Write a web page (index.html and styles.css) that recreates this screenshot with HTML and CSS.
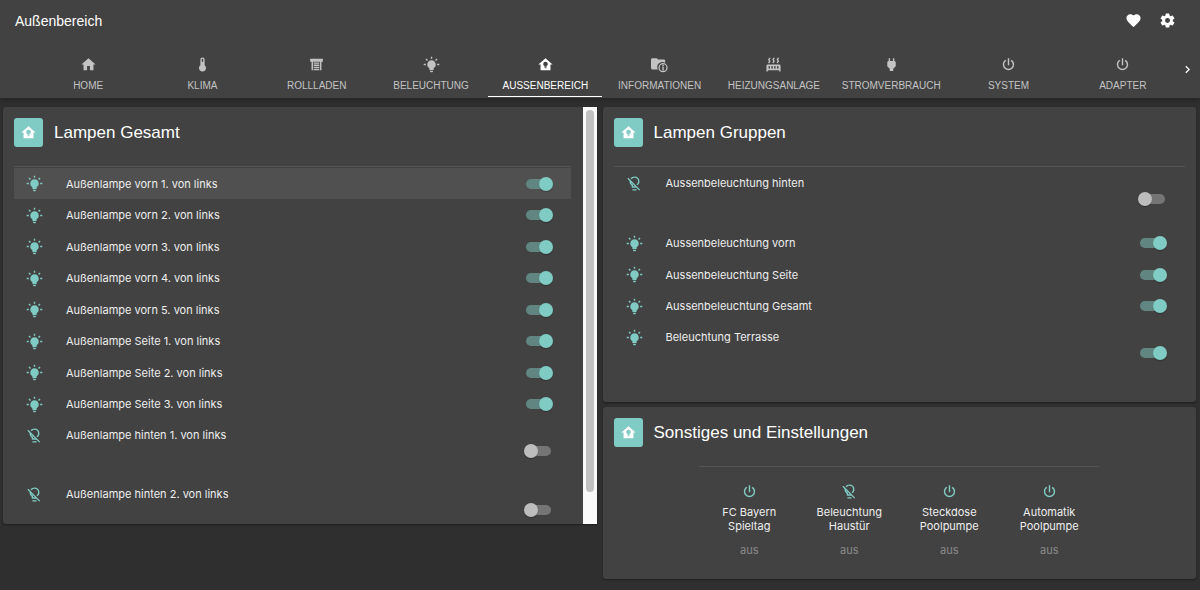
FILE: index.html
```html
<!DOCTYPE html>
<html lang="de">
<head>
<meta charset="utf-8">
<meta name="viewport" content="width=device-width, initial-scale=1">
<title>Außenbereich</title>
<link rel="stylesheet" href="styles.css">
</head>
<body>
<svg class="sprite" aria-hidden="true">
  <symbol id="home" viewBox="0 0 24 24"><path d="M10,20V14H14V20H19V12H22L12,3L2,12H5V20H10Z"/></symbol>
  <symbol id="thermometer" viewBox="0 0 24 24"><path d="M15 13V5A3 3 0 0 0 9 5V13A5 5 0 1 0 15 13M12 4A1 1 0 0 1 13 5V8H11V5A1 1 0 0 1 12 4Z"/></symbol>
  <symbol id="shutter" viewBox="0 0 24 24"><path d="M3 4H21V8H19V20H17V8H7V20H5V8H3V4M8 9H16V11H8V9M8 12H16V14H8V12M8 15H16V17H8V15M8 18H16V20H8V18Z"/></symbol>
  <symbol id="bulb-on" viewBox="0 0 24 24"><path d="M12,6A6,6 0 0,1 18,12C18,14.22 16.79,16.16 15,17.2V19A1,1 0 0,1 14,20H10A1,1 0 0,1 9,19V17.2C7.21,16.16 6,14.22 6,12A6,6 0 0,1 12,6M14,21V22A1,1 0 0,1 13,23H11A1,1 0 0,1 10,22V21H14M20,11H23V13H20V11M1,11H4V13H1V11M13,1V4H11V1H13M4.92,3.5L7.05,5.64L5.63,7.05L3.5,4.93L4.92,3.5M16.95,5.63L19.07,3.5L20.5,4.93L18.37,7.05L16.95,5.63Z"/></symbol>
  <symbol id="bulb-off" viewBox="0 0 24 24"><path d="M12,2C9.76,2 7.78,3.05 6.5,4.68L7.93,6.11C8.84,4.84 10.32,4 12,4A5,5 0 0,1 17,9C17,10.68 16.16,12.16 14.89,13.06L16.31,14.5C17.94,13.21 19,11.24 19,9A7,7 0 0,0 12,2M3.28,4L2,5.27L5.04,8.3C5,8.53 5,8.76 5,9C5,11.38 6.19,13.47 8,14.74V17A1,1 0 0,0 9,18H14.73L18.73,22L20,20.72L3.28,4M7.23,10.5L12.73,16H10V13.58C8.68,13 7.66,11.88 7.23,10.5M9,20V21A1,1 0 0,0 10,22H14A1,1 0 0,0 15,21V20H9Z"/></symbol>
  <symbol id="home-bulb" viewBox="0 0 24 24"><path fill-rule="evenodd" d="M12,3L2,12H5V20H19V12H22L12,3M12,8A3.2,3.2 0 0,1 15.2,11.2C15.2,12.4 14.6,13.4 13.6,13.9V15H10.4V13.9C9.4,13.4 8.8,12.4 8.8,11.2A3.2,3.2 0 0,1 12,8M10.6,16H13.4V17.3H10.6V16Z"/></symbol>
  <symbol id="folder-info" viewBox="0 0 24 24"><path fill-rule="evenodd" d="M2,3H8L10,5H18A2,2 0 0,1 20,7V9.6A7.3,7.3 0 0,0 9.6,19H2A2,2 0 0,1 0,17V5A2,2 0 0,1 2,3Z"/><path fill-rule="evenodd" d="M17,10A6.5,6.5 0 1,1 17,23A6.5,6.5 0 0,1 17,10M17,11.8A4.7,4.7 0 1,0 17,21.2A4.7,4.7 0 0,0 17,11.8M16,12.5H18V14.3H16V12.5M16,15.2H18V20.5H16V15.2Z"/></symbol>
  <symbol id="radiator" viewBox="0 0 24 24"><path fill-rule="evenodd" d="M7.95,3L6.53,5.19L7.95,7.4L5.95,10.5L4.22,9.6L5.64,7.39L4.22,5.19L6.22,2.09L7.95,3M13.95,2.89L12.53,5.1L13.95,7.3L11.95,10.4L10.22,9.5L11.64,7.3L10.22,5.1L12.22,2L13.95,2.89M20,2.89L18.56,5.1L20,7.3L18,10.4L16.25,9.5L17.67,7.3L16.25,5.1L18.25,2L20,2.89M2,22V14A2,2 0 0,1 4,12H20A2,2 0 0,1 22,14V22H20V20H4V22H2M6,14A1,1 0 0,0 5,15V17A1,1 0 0,0 7,17V15A1,1 0 0,0 6,14M10,14A1,1 0 0,0 9,15V17A1,1 0 0,0 11,17V15A1,1 0 0,0 10,14M14,14A1,1 0 0,0 13,15V17A1,1 0 0,0 15,17V15A1,1 0 0,0 14,14M18,14A1,1 0 0,0 17,15V17A1,1 0 0,0 19,17V15A1,1 0 0,0 18,14Z"/></symbol>
  <symbol id="plug" viewBox="0 0 24 24"><path d="M16,7V3H14V7H10V3H8V7C7,7 6,8 6,9V14.5L9.5,18V21H14.5V18L18,14.5V9C18,8 17,7 16,7Z"/></symbol>
  <symbol id="power" viewBox="0 0 24 24"><path d="M16.56,5.44L15.11,6.89A6,6 0 0,1 18,12A6,6 0 0,1 6,12C6,9.83 7.16,7.94 8.88,6.88L7.44,5.44C5.36,6.88 4,9.28 4,12A8,8 0 0,0 20,12C20,9.28 18.64,6.88 16.56,5.44M13,3H11V13H13"/></symbol>
  <symbol id="heart" viewBox="0 0 24 24"><path d="M12,21.35L10.55,20.03C5.4,15.36 2,12.27 2,8.5C2,5.41 4.42,3 7.5,3C9.24,3 10.91,3.81 12,5.08C13.09,3.81 14.76,3 16.5,3C19.58,3 22,5.41 22,8.5C22,12.27 18.6,15.36 13.45,20.03L12,21.35Z"/></symbol>
  <symbol id="cog" viewBox="0 0 24 24"><path d="M12,15.5A3.5,3.5 0 0,1 8.5,12A3.5,3.5 0 0,1 12,8.5A3.5,3.5 0 0,1 15.5,12A3.5,3.5 0 0,1 12,15.5M19.43,12.97C19.47,12.65 19.5,12.33 19.5,12C19.5,11.67 19.47,11.34 19.43,11L21.54,9.37C21.73,9.22 21.78,8.95 21.66,8.73L19.66,5.27C19.54,5.05 19.27,4.96 19.05,5.05L16.56,6.05C16.04,5.66 15.5,5.32 14.87,5.07L14.5,2.42C14.46,2.18 14.25,2 14,2H10C9.75,2 9.54,2.18 9.5,2.42L9.13,5.07C8.5,5.32 7.96,5.66 7.44,6.05L4.95,5.05C4.73,4.96 4.46,5.05 4.34,5.27L2.34,8.73C2.21,8.95 2.27,9.22 2.46,9.37L4.57,11C4.53,11.34 4.5,11.67 4.5,12C4.5,12.33 4.53,12.65 4.57,12.97L2.46,14.63C2.27,14.78 2.21,15.05 2.34,15.27L4.34,18.73C4.46,18.95 4.73,19.03 4.95,18.95L7.44,17.94C7.96,18.34 8.5,18.68 9.13,18.93L9.5,21.58C9.54,21.82 9.75,22 10,22H14C14.25,22 14.46,21.82 14.5,21.58L14.87,18.93C15.5,18.67 16.04,18.34 16.56,17.94L19.05,18.95C19.27,19.03 19.54,18.95 19.66,18.73L21.66,15.27C21.78,15.05 21.73,14.78 21.54,14.63L19.43,12.97Z"/></symbol>
  <symbol id="chevron" viewBox="0 0 24 24"><path d="M8.59,16.58L13.17,12L8.59,7.41L10,6L16,12L10,18L8.59,16.58Z"/></symbol>
</svg>

<header class="appbar">
  <div class="toolbar">
    <h1 class="page-title">Außenbereich</h1>
    <div class="actions">
      <button class="icon-button" type="button" aria-label="Favoriten"><svg class="icon"><use href="#heart"/></svg></button>
      <button class="icon-button" type="button" aria-label="Einstellungen"><svg class="icon"><use href="#cog"/></svg></button>
    </div>
  </div>
  <nav class="tabs">
    <a class="tab" href="#"><svg class="icon"><use href="#home"/></svg><span>HOME</span></a>
    <a class="tab" href="#"><svg class="icon"><use href="#thermometer"/></svg><span>KLIMA</span></a>
    <a class="tab" href="#"><svg class="icon"><use href="#shutter"/></svg><span>ROLLLADEN</span></a>
    <a class="tab" href="#"><svg class="icon"><use href="#bulb-on"/></svg><span>BELEUCHTUNG</span></a>
    <a class="tab tab-active" href="#" aria-current="page"><svg class="icon"><use href="#home-bulb"/></svg><span>AUSSENBEREICH</span></a>
    <a class="tab" href="#"><svg class="icon"><use href="#folder-info"/></svg><span>INFORMATIONEN</span></a>
    <a class="tab" href="#"><svg class="icon"><use href="#radiator"/></svg><span>HEIZUNGSANLAGE</span></a>
    <a class="tab tab-wide" href="#"><svg class="icon"><use href="#plug"/></svg><span>STROMVERBRAUCH</span></a>
    <a class="tab" href="#"><svg class="icon"><use href="#power"/></svg><span>SYSTEM</span></a>
    <a class="tab" href="#"><svg class="icon"><use href="#power"/></svg><span>ADAPTER</span></a>
    <button class="tabs-next" type="button" aria-label="Weitere Tabs"><svg class="chevron"><use href="#chevron"/></svg></button>
  </nav>
</header>

<main class="board">
  <section class="card card-scroll">
    <div class="card-body">
      <div class="card-head">
        <span class="badge"><svg class="icon"><use href="#home-bulb"/></svg></span>
        <h2 class="card-title">Lampen Gesamt</h2>
      </div>
      <ul class="rows">
        <li><label class="row row-hover"><svg class="icon"><use href="#bulb-on"/></svg><span class="row-text">Außenlampe vorn 1. von links</span><input class="switch" type="checkbox" role="switch" checked></label></li>
        <li><label class="row"><svg class="icon"><use href="#bulb-on"/></svg><span class="row-text">Außenlampe vorn 2. von links</span><input class="switch" type="checkbox" role="switch" checked></label></li>
        <li><label class="row"><svg class="icon"><use href="#bulb-on"/></svg><span class="row-text">Außenlampe vorn 3. von links</span><input class="switch" type="checkbox" role="switch" checked></label></li>
        <li><label class="row"><svg class="icon"><use href="#bulb-on"/></svg><span class="row-text">Außenlampe vorn 4. von links</span><input class="switch" type="checkbox" role="switch" checked></label></li>
        <li><label class="row"><svg class="icon"><use href="#bulb-on"/></svg><span class="row-text">Außenlampe vorn 5. von links</span><input class="switch" type="checkbox" role="switch" checked></label></li>
        <li><label class="row"><svg class="icon"><use href="#bulb-on"/></svg><span class="row-text">Außenlampe Seite 1. von links</span><input class="switch" type="checkbox" role="switch" checked></label></li>
        <li><label class="row"><svg class="icon"><use href="#bulb-on"/></svg><span class="row-text">Außenlampe Seite 2. von links</span><input class="switch" type="checkbox" role="switch" checked></label></li>
        <li><label class="row"><svg class="icon"><use href="#bulb-on"/></svg><span class="row-text">Außenlampe Seite 3. von links</span><input class="switch" type="checkbox" role="switch" checked></label></li>
        <li><label class="row row-tall"><svg class="icon"><use href="#bulb-off"/></svg><span class="row-text">Außenlampe hinten 1. von links</span><input class="switch" type="checkbox" role="switch"></label></li>
        <li><label class="row row-tall"><svg class="icon"><use href="#bulb-off"/></svg><span class="row-text">Außenlampe hinten 2. von links</span><input class="switch" type="checkbox" role="switch"></label></li>
      </ul>
    </div>
    <div class="scrollbar"><div class="scrollbar-thumb"></div></div>
  </section>

  <div class="column">
    <section class="card">
      <div class="card-body">
        <div class="card-head">
          <span class="badge"><svg class="icon"><use href="#home-bulb"/></svg></span>
          <h2 class="card-title">Lampen Gruppen</h2>
        </div>
        <ul class="rows rows-groups">
          <li><label class="row row-tall"><svg class="icon"><use href="#bulb-off"/></svg><span class="row-text">Aussenbeleuchtung hinten</span><input class="switch" type="checkbox" role="switch"></label></li>
          <li><label class="row"><svg class="icon"><use href="#bulb-on"/></svg><span class="row-text">Aussenbeleuchtung vorn</span><input class="switch" type="checkbox" role="switch" checked></label></li>
          <li><label class="row"><svg class="icon"><use href="#bulb-on"/></svg><span class="row-text">Aussenbeleuchtung Seite</span><input class="switch" type="checkbox" role="switch" checked></label></li>
          <li><label class="row"><svg class="icon"><use href="#bulb-on"/></svg><span class="row-text">Aussenbeleuchtung Gesamt</span><input class="switch" type="checkbox" role="switch" checked></label></li>
          <li><label class="row row-tall"><svg class="icon"><use href="#bulb-on"/></svg><span class="row-text">Beleuchtung Terrasse</span><input class="switch" type="checkbox" role="switch" checked></label></li>
        </ul>
      </div>
    </section>

    <section class="card">
      <div class="card-body">
        <div class="card-head">
          <span class="badge"><svg class="icon"><use href="#home-bulb"/></svg></span>
          <h2 class="card-title">Sonstiges und Einstellungen</h2>
        </div>
        <div class="tiles">
          <button class="tile" type="button"><svg class="icon"><use href="#power"/></svg><span class="tile-name">FC Bayern Spieltag</span><span class="tile-state">aus</span></button>
          <button class="tile" type="button"><svg class="icon"><use href="#bulb-off"/></svg><span class="tile-name">Beleuchtung Haustür</span><span class="tile-state">aus</span></button>
          <button class="tile" type="button"><svg class="icon"><use href="#power"/></svg><span class="tile-name">Steckdose Poolpumpe</span><span class="tile-state">aus</span></button>
          <button class="tile" type="button"><svg class="icon"><use href="#power"/></svg><span class="tile-name">Automatik Poolpumpe</span><span class="tile-state">aus</span></button>
        </div>
      </div>
    </section>
  </div>
</main>
</body>
</html>
```

FILE: styles.css
```css
* {
  box-sizing: border-box;
}

body {
  margin: 0;
  min-height: 100vh;
  background: #2f2f2f;
  color: #fff;
  font-family: Inter, "Liberation Sans", sans-serif;
  font-size: 11px;
}

button {
  padding: 0;
  border: 0;
  background: none;
  color: inherit;
  font: inherit;
  cursor: pointer;
}

.sprite {
  display: none;
}

.icon {
  display: block;
  flex: none;
  width: 17px;
  height: 17px;
  fill: currentColor;
}

/* App bar */
.appbar {
  background: #424242;
  box-shadow: 0 1px 6px rgba(0, 0, 0, 0.3);
  font-family: "Liberation Sans", Arial, sans-serif;
}

.toolbar {
  display: flex;
  align-items: center;
  justify-content: space-between;
  height: 41px;
  padding: 0 24px 0 15px;
}

.page-title {
  margin: 0;
  font-size: 14px;
  font-weight: 400;
}

.actions {
  display: flex;
  gap: 17px;
}

.tabs {
  display: flex;
  padding-left: 31px;
}

.tab {
  display: flex;
  flex: 1 1 114px;
  flex-direction: column;
  align-items: center;
  gap: 5px;
  height: 57px;
  padding-top: 15px;
  color: #c3c3c3;
  font-size: 10px;
  line-height: 15px;
  text-decoration: none;
}

.tab-wide {
  flex-basis: 120px;
}

.tab-active {
  background: linear-gradient(#fff, #fff) 0 55px / 100% 1px no-repeat;
  color: #fff;
}

.tabs-next {
  display: grid;
  place-items: center start;
  flex: none;
  width: 20px;
}

.chevron {
  width: 15px;
  height: 15px;
  fill: currentColor;
}

/* Cards */
.board {
  display: grid;
  grid-template-columns: 1fr 1fr;
  align-items: start;
  gap: 6px;
  padding: 9px 4px 11px 3px;
}

.column {
  display: grid;
  gap: 5px;
}

.card {
  overflow: hidden;
  border-radius: 3px;
  background: #424242;
  box-shadow: 0 1px 2px rgba(0, 0, 0, 0.4);
}

.card-scroll {
  display: flex;
  max-height: 417px;
  border-radius: 3px 0 0 3px;
}

.card-body {
  flex: 1;
  padding: 11px;
}

.scrollbar {
  flex: none;
  width: 14px;
  padding: 3px;
  background: #fafafa;
}

.scrollbar-thumb {
  height: 93%;
  border-radius: 4px;
  background: #c1c1c1;
}

.card-head {
  display: flex;
  align-items: center;
  gap: 11px;
  margin-bottom: 19px;
}

.badge {
  display: grid;
  place-items: center;
  width: 29px;
  height: 29px;
  border-radius: 3px;
  background: #80cbc4;
}

.card-title {
  margin: 0;
  font-family: "Liberation Sans", Arial, sans-serif;
  font-size: 17px;
  font-weight: 400;
}

/* Lamp rows */
.rows {
  margin: 0;
  padding: 1px 0 0;
  border-top: 1px solid #545454;
  list-style: none;
}

.card-scroll .rows {
  margin-right: 1px;
}

.rows-groups {
  padding-bottom: 10px;
}

.row {
  display: flex;
  align-items: center;
  height: 31px;
  padding: 0 18px 0 12px;
  color: #80cbc4;
  cursor: pointer;
}

li:nth-child(even) .row {
  height: 32px;
}

.row-hover {
  background: #505050;
}

.row-text {
  flex: 1;
  margin-left: 23px;
  color: #eee;
}

li .row-tall,
li:nth-child(even) .row-tall {
  align-items: flex-start;
  height: 59px;
  padding-top: 7px;
}

.row-tall .row-text {
  line-height: 17px;
}

.row-tall .switch {
  margin-top: 17px;
}

.switch {
  display: grid;
  align-items: center;
  width: 28px;
  height: 14px;
  margin: 0;
  appearance: none;
  cursor: pointer;
}

.switch:not(:checked) {
  margin-right: 1px;
}

.switch::before,
.switch::after {
  grid-area: 1 / 1;
  content: "";
}

.switch::before {
  height: 10px;
  margin: 0 1px;
  border-radius: 5px;
  background: #757575;
}

.switch::after {
  width: 14px;
  height: 14px;
  border-radius: 50%;
  background: #bdbdbd;
  box-shadow: 0 1px 1px rgba(0, 0, 0, 0.25);
}

.switch:checked::before {
  background: #618681;
}

.switch:checked::after {
  justify-self: end;
  background: #80cbc4;
}

/* Tiles */
.tiles {
  display: grid;
  grid-template-columns: repeat(4, 100px);
  justify-content: center;
  width: fit-content;
  margin: 0 auto;
  padding: 16px 0 11px;
  border-top: 1px solid #545454;
}

.tile {
  display: flex;
  flex-direction: column;
  align-items: center;
  padding: 0 14px;
  color: #80cbc4;
  line-height: 14px;
}

.tile-name {
  margin-top: 5px;
  color: #eee;
}

.tile-state {
  margin-top: 10px;
  color: #8a8a8a;
}
```
